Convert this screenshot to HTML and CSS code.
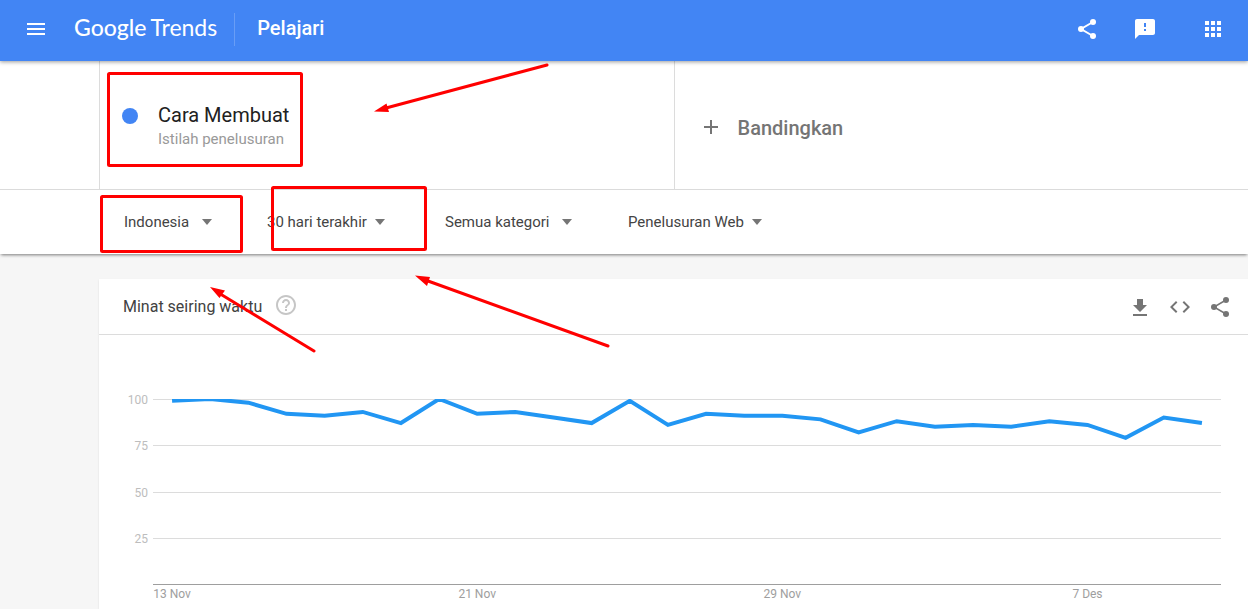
FILE: index.html
```html
<!DOCTYPE html>
<html lang="id">
<head>
  <meta charset="UTF-8" />
  <meta name="viewport" content="width=device-width, initial-scale=1.0"/>
  <title>Cara Membuat - Pelajari - Google Trends</title>
  <link rel="stylesheet" href="styles.css">
</head>
<body>
  <header class="topbar">
    <button class="icon-btn" aria-label="Menu">
      <svg viewBox="0 0 24 24"><path d="M3 18h18v-2H3v2zm0-5h18v-2H3v2zm0-7v2h18V6H3z"/></svg>
    </button>
    <a href="#" class="logo"><span class="logo-google">Google</span><span>Trends</span></a>
    <h1>Pelajari</h1>
    <div class="topbar-actions">
      <button class="icon-btn" aria-label="Bagikan">
        <svg viewBox="0 0 24 24"><path class="share-line" d="M18 5 6 12l12 7"/><circle cx="18" cy="5" r="3"/><circle cx="6" cy="12" r="3"/><circle cx="18" cy="19" r="3"/></svg>
      </button>
      <button class="icon-btn" aria-label="Kirim masukan">
        <svg viewBox="0 0 24 24"><path d="M20 2H4c-1.1 0-2 .9-2 2v18l4-4h14c1.1 0 2-.9 2-2V4c0-1.1-.9-2-2-2zm-7 12h-2v-2h2v2zm0-4h-2V6h2v4z"/></svg>
      </button>
      <button class="icon-btn apps" aria-label="Aplikasi Google">
        <svg viewBox="0 0 24 24"><path d="M4 8h4V4H4v4zm6 12h4v-4h-4v4zm-6 0h4v-4H4v4zm0-6h4v-4H4v4zm6 0h4v-4h-4v4zm6-10v4h4V4h-4zm-6 4h4V4h-4v4zm6 6h4v-4h-4v4zm0 6h4v-4h-4v4z"/></svg>
      </button>
    </div>
  </header>

  <section class="terms">
    <div class="term">
      <span class="dot"></span>
      <div>
        <h2>Cara Membuat</h2>
        <p>Istilah penelusuran</p>
      </div>
    </div>
    <button class="compare">
      <svg viewBox="0 0 24 24"><path d="M19 13h-6v6h-2v-6H5v-2h6V5h2v6h6v2z"/></svg>
      <span>Bandingkan</span>
    </button>
  </section>

  <nav class="filters">
    <label class="filter region">
      <select aria-label="Wilayah"><option>Indonesia</option></select>
      <span class="caret"></span>
    </label>
    <label class="filter period">
      <select aria-label="Waktu"><option>30 hari terakhir</option></select>
      <span class="caret"></span>
    </label>
    <label class="filter category">
      <select aria-label="Kategori"><option>Semua kategori</option></select>
      <span class="caret"></span>
    </label>
    <label class="filter source">
      <select aria-label="Jenis penelusuran"><option>Penelusuran Web</option></select>
      <span class="caret"></span>
    </label>
  </nav>

  <main>
    <section class="card">
      <div class="card-header">
        <h3>Minat seiring waktu</h3>
        <button class="icon-btn help" aria-label="Bantuan">
          <svg viewBox="0 0 24 24"><path d="M11 18h2v-2h-2v2zm1-16C6.48 2 2 6.48 2 12s4.48 10 10 10 10-4.48 10-10S17.52 2 12 2zm0 18c-4.41 0-8-3.59-8-8s3.59-8 8-8 8 3.59 8 8-3.59 8-8 8zm0-14c-2.21 0-4 1.79-4 4h2c0-1.1.9-2 2-2s2 .9 2 2c0 2-3 1.75-3 5h2c0-2.25 3-2.5 3-5 0-2.21-1.79-4-4-4z"/></svg>
        </button>
        <div class="card-actions">
          <button class="icon-btn" aria-label="Unduh CSV">
            <svg viewBox="0 0 24 24"><path d="M19 10h-4V4H9v6H5l7 7 7-7zM5 19v2h14v-2H5z"/></svg>
          </button>
          <button class="icon-btn" aria-label="Sematkan">
            <svg viewBox="0 0 24 24"><path d="M9.4 16.6 4.8 12l4.6-4.6L8 6l-6 6 6 6 1.4-1.4zm5.2 0 4.6-4.6-4.6-4.6L16 6l6 6-6 6-1.4-1.4z"/></svg>
          </button>
          <button class="icon-btn" aria-label="Bagikan grafik">
            <svg viewBox="0 0 24 24"><path class="share-line thin" d="M18 5 6 12l12 7"/><circle cx="18" cy="5" r="3"/><circle cx="6" cy="12" r="3"/><circle cx="18" cy="19" r="3"/></svg>
          </button>
        </div>
      </div>

      <div class="chart">
        <ul class="y-axis">
          <li>100</li>
          <li>75</li>
          <li>50</li>
          <li>25</li>
        </ul>
        <div class="plot">
          <div class="gridlines"><span></span><span></span><span></span><span></span></div>
          <!-- one unit across per day, one unit down per point of interest -->
          <svg class="series" viewBox="0 0 28 100" preserveAspectRatio="none" role="img" aria-label="Minat seiring waktu">
            <polyline points="0.5,1 1.5,0 2.5,2 3.5,8 4.5,9 5.5,7 6.5,13 7.5,0 8.5,8 9.5,7 10.5,10 11.5,13 12.5,1 13.5,14 14.5,8 15.5,9 16.5,9 17.5,11 18.5,18 19.5,12 20.5,15 21.5,14 22.5,15 23.5,12 24.5,14 25.5,21 26.5,10 27.5,13"/>
          </svg>
        </div>
        <div class="x-axis">
          <span>13 Nov</span>
          <span>21 Nov</span>
          <span>29 Nov</span>
          <span>7 Des</span>
        </div>
      </div>
    </section>
  </main>

  <!-- red markers over the page -->
  <svg class="markers" width="620" height="360" aria-hidden="true">
    <rect x="108.5" y="73.5" width="193" height="92" rx="1"/>
    <rect x="101.5" y="196.5" width="140" height="55" rx="1"/>
    <rect x="272.5" y="187.5" width="153" height="62" rx="1"/>
    <path d="M547 65 386 108M608 346 428 281M314 351 222 295"/>
    <path class="head" d="M374 111.5 386.5 103.5 389 112zM415 275.5 430 277 427 286zM210 287 225 290.5 219.5 298z"/>
  </svg>
</body>
</html>
```
FILE: styles.css
```css
:root {
  --blue: #4285f4;
  --line: #2196f3;
  --border: #dcdcdc;
  --grey: #757575;
  --red: #ff0000;
  --gutter: 99px;
}

* {
  box-sizing: border-box;
}

body {
  margin: 0;
  min-height: 100vh;
  display: flex;
  flex-direction: column;
  font-family: Roboto, "Liberation Sans", sans-serif;
  background: #f6f6f6;
  color: #212121;
}

h1, h2, h3, p, ul {
  margin: 0;
  padding: 0;
  font-weight: 400;
}

button, select {
  border: none;
  padding: 0;
  background: none;
  font-family: inherit;
  cursor: pointer;
}

svg {
  display: block;
}

.icon-btn {
  width: 24px;
  height: 24px;
  color: inherit;
}

.icon-btn svg, .compare svg {
  width: 24px;
  height: 24px;
  fill: currentColor;
}

.icon-btn .share-line {
  fill: none;
  stroke: currentColor;
  stroke-width: 2;
}

.icon-btn .thin {
  stroke-width: 1.5;
}

/* top bar */
.topbar {
  position: relative;
  z-index: 2;
  display: flex;
  align-items: center;
  height: 61px;
  padding: 0 23px 3px 24px;
  background: var(--blue);
  color: #fff;
  box-shadow: 0 1px 4px rgba(0,0,0,0.4);
}

.logo {
  display: flex;
  align-items: baseline;
  gap: 4px;
  padding-bottom: 4px;
  margin-left: 26px;
  color: #fff;
  text-decoration: none;
  font-family: Lato, sans-serif;
  font-size: 23px;
  line-height: 28px;
}

.logo-google {
  font-weight: 500;
}

.topbar h1 {
  margin-left: 17px;
  padding: 0 0 2px 22px;
  border-left: 1px solid #689df6;
  font-size: 20px;
  font-weight: 500;
  line-height: 31px;
}

.topbar-actions {
  display: flex;
  gap: 34px;
  margin-left: auto;
}

.topbar-actions .apps {
  margin-left: 10px;
}

/* search terms */
.terms {
  display: grid;
  grid-template-columns: 1fr 1fr;
  height: 129px;
  padding-left: var(--gutter);
  background: #fff;
  border-bottom: 1px solid var(--border);
}

.term {
  display: flex;
  align-items: center;
  gap: 20px;
  padding: 2px 0 0 22px;
  border-left: 1px solid var(--border);
}

.dot {
  width: 16px;
  height: 16px;
  margin-bottom: 20px;
  border-radius: 50%;
  background: var(--blue);
}

.term h2 {
  font-size: 20px;
  line-height: 26px;
}

.term p {
  font-size: 15px;
  line-height: 22px;
  color: #999;
}

.compare {
  display: flex;
  align-items: center;
  gap: 15px;
  padding: 3px 0 0 24px;
  border-left: 1px solid var(--border);
  font-size: 20px;
  font-weight: 500;
  color: var(--grey);
}

.compare span {
  padding-top: 2px;
}

/* filters */
.filters {
  position: relative;
  z-index: 1;
  display: grid;
  grid-template-columns: 143px 178px 183px auto;
  align-items: center;
  height: 64px;
  padding-left: 124px;
  background: #fff;
  box-shadow: 0 2px 3px -1px rgba(0,0,0,0.5);
}

.filter {
  display: flex;
  align-items: center;
}

.filter select {
  appearance: none;
  height: 32px;
  font-size: 15px;
  color: #444;
}

.region select {
  width: 78px;
}

.period select {
  width: 108px;
}

.category select {
  width: 117px;
}

.source select {
  width: 124px;
}

.caret {
  border: 5px solid transparent;
  border-top: 6px solid var(--grey);
  border-bottom: none;
}

/* chart card */
main {
  flex: 1;
  display: flex;
  flex-direction: column;
  padding: 25px 0 0 var(--gutter);
}

.card {
  flex: 1;
  background: #fff;
  box-shadow: 0 1px 2px rgba(0,0,0,0.1);
}

.card-header {
  display: flex;
  align-items: center;
  height: 56px;
  padding: 0 16px 0 24px;
  border-bottom: 1px solid var(--border);
}

.card-header h3 {
  font-size: 16px;
  color: #424242;
}

.help {
  margin: 0 0 3px 12px;
  color: #c6c6c6;
}

.card-actions {
  display: flex;
  gap: 16px;
  margin-left: auto;
  color: var(--grey);
}

.chart {
  display: grid;
  grid-template-columns: 49px 1fr;
  column-gap: 5px;
  padding: 64px 27px 0 0;
  font-size: 12px;
  line-height: 14px;
}

.y-axis {
  display: grid;
  grid-template-rows: repeat(4, 1fr);
  height: 185px;
  margin-top: -6px;
  list-style: none;
  text-align: right;
  color: #bdbdbd;
}

.plot {
  display: grid;
  height: 186px;
  border-bottom: 1px solid #9e9e9e;
}

.gridlines, .series {
  grid-area: 1 / 1;
  width: 100%;
  height: 185px;
}

.gridlines {
  display: grid;
  grid-template-rows: repeat(4, 1fr);
}

.gridlines span {
  border-top: 1px solid var(--border);
}

.series {
  overflow: hidden;
}

.series polyline {
  fill: none;
  stroke: var(--line);
  stroke-width: 4;
  vector-effect: non-scaling-stroke;
}

/* a column per day, labels every eighth */
.x-axis {
  grid-column: 2;
  display: grid;
  grid-template-columns: repeat(28, minmax(0, 1fr));
  padding-top: 2px;
  color: #9e9e9e;
}

.x-axis span {
  justify-self: center;
  white-space: nowrap;
}

.x-axis span:nth-child(2) {
  grid-column: 9;
}

.x-axis span:nth-child(3) {
  grid-column: 17;
}

.x-axis span:nth-child(4) {
  grid-column: 25;
}

.markers {
  position: absolute;
  top: 0;
  left: 0;
  z-index: 3;
  pointer-events: none;
  fill: none;
  stroke: var(--red);
  stroke-width: 3;
  stroke-linecap: round;
}

.markers .head {
  fill: var(--red);
  stroke: none;
}
```
